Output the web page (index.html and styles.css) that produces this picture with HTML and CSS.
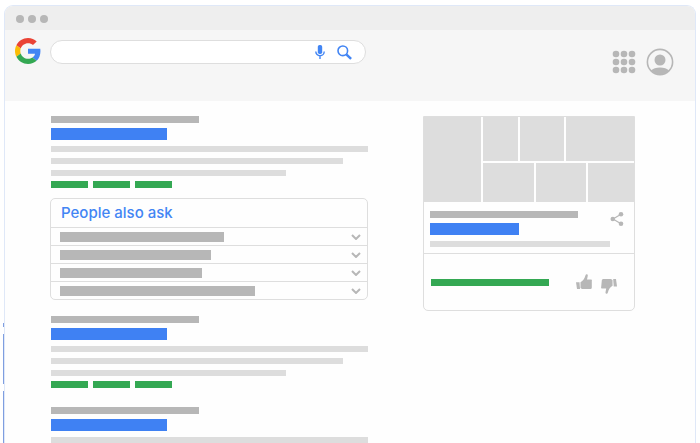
FILE: index.html
```html
<!DOCTYPE html>
<html lang="en">
<head>
    <meta charset="UTF-8">
    <meta name="viewport" content="width=device-width, initial-scale=1.0">
    <title>Search results</title>
    <link rel="stylesheet" href="styles.css">
</head>
<body>

    <div class="browser">
        <div class="titlebar">
            <span class="dot"></span>
            <span class="dot"></span>
            <span class="dot"></span>
        </div>

        <header class="header">
            <a class="logo" href="#" aria-label="Google">
                <svg viewBox="0 0 48 48" width="26" height="26">
                    <path fill="#EA4335" d="M24 9.5c3.54 0 6.71 1.22 9.21 3.6l6.85-6.85C35.9 2.38 30.47 0 24 0 14.62 0 6.51 5.38 2.56 13.22l7.98 6.19C12.43 13.72 17.74 9.5 24 9.5z"/>
                    <path fill="#4285F4" d="M46.98 24.55c0-1.57-.15-3.09-.38-4.55H24v9.02h12.94c-.58 2.96-2.26 5.48-4.78 7.18l7.73 6c4.51-4.18 7.09-10.36 7.09-17.65z"/>
                    <path fill="#FBBC05" d="M10.53 28.59c-.48-1.45-.76-2.99-.76-4.59s.27-3.14.76-4.59l-7.98-6.19C.92 16.46 0 20.12 0 24c0 3.88.92 7.54 2.56 10.78l7.97-6.19z"/>
                    <path fill="#34A853" d="M24 48c6.48 0 11.93-2.13 15.89-5.81l-7.73-6c-2.15 1.45-4.92 2.3-8.16 2.3-6.26 0-11.57-4.22-13.47-9.91l-7.98 6.19C6.51 42.62 14.62 48 24 48z"/>
                </svg>
            </a>

            <form class="search">
                <input class="search-input" type="text" aria-label="Search">
                <button class="icon-button" type="button" aria-label="Voice search">
                    <svg viewBox="0 0 10 14" width="10" height="14">
                        <rect x="2.8" y="0" width="4.4" height="9" rx="1.8" fill="#4285F4"/>
                        <path d="M.8 6.5a4.2 4.2 0 0 0 8.4 0M5 10.7V14" fill="none" stroke="#4285F4" stroke-width="1.4"/>
                    </svg>
                </button>
                <button class="icon-button" type="button" aria-label="Search">
                    <svg viewBox="0 0 15 15" width="15" height="15">
                        <circle cx="5.8" cy="5.8" r="4.8" fill="none" stroke="#4285F4" stroke-width="1.6"/>
                        <path d="M9.3 9.3l4.8 4.6" stroke="#4285F4" stroke-width="2.4"/>
                    </svg>
                </button>
            </form>

            <div class="account">
                <button class="icon-button" type="button" aria-label="Apps">
                    <svg viewBox="0 0 24 24" width="24" height="24" fill="#b7b7b7">
                        <circle cx="4" cy="4" r="3.3"/><circle cx="12" cy="4" r="3.3"/><circle cx="20" cy="4" r="3.3"/>
                        <circle cx="4" cy="12" r="3.3"/><circle cx="12" cy="12" r="3.3"/><circle cx="20" cy="12" r="3.3"/>
                        <circle cx="4" cy="20" r="3.3"/><circle cx="12" cy="20" r="3.3"/><circle cx="20" cy="20" r="3.3"/>
                    </svg>
                </button>
                <button class="icon-button" type="button" aria-label="Account">
                    <svg viewBox="0 0 28 28" width="28" height="28">
                        <circle cx="14" cy="14" r="12.6" fill="none" stroke="#b7b7b7" stroke-width="1.6"/>
                        <circle cx="14" cy="12" r="5.5" fill="#b7b7b7"/>
                        <path d="M5 22.500c2-2 5-3 9-3s7 1 9 3A12.600 12.600 0 0 1 5 22.500z" fill="#b7b7b7"/>
                    </svg>
                </button>
            </div>
        </header>

        <main class="page">
            <div class="results">
                <article class="result">
                    <div class="bar bar-url"></div>
                    <div class="bar bar-title"></div>
                    <div class="bar bar-text"></div>
                    <div class="bar bar-text medium"></div>
                    <div class="bar bar-text short"></div>
                    <div class="links">
                        <div class="bar bar-link"></div>
                        <div class="bar bar-link"></div>
                        <div class="bar bar-link"></div>
                    </div>
                </article>

                <section class="ask">
                    <h2 class="ask-title">People also ask</h2>
                    <button class="ask-row" type="button" aria-label="Question 1">
                        <span class="question q1"></span>
                        <svg class="chevron" viewBox="0 0 10 6" width="10" height="6"><path d="M1 1l4 4 4-4"/></svg>
                    </button>
                    <button class="ask-row" type="button" aria-label="Question 2">
                        <span class="question q2"></span>
                        <svg class="chevron" viewBox="0 0 10 6" width="10" height="6"><path d="M1 1l4 4 4-4"/></svg>
                    </button>
                    <button class="ask-row" type="button" aria-label="Question 3">
                        <span class="question q3"></span>
                        <svg class="chevron" viewBox="0 0 10 6" width="10" height="6"><path d="M1 1l4 4 4-4"/></svg>
                    </button>
                    <button class="ask-row" type="button" aria-label="Question 4">
                        <span class="question q4"></span>
                        <svg class="chevron" viewBox="0 0 10 6" width="10" height="6"><path d="M1 1l4 4 4-4"/></svg>
                    </button>
                </section>

                <article class="result">
                    <div class="bar bar-url"></div>
                    <div class="bar bar-title"></div>
                    <div class="bar bar-text"></div>
                    <div class="bar bar-text medium"></div>
                    <div class="bar bar-text short"></div>
                    <div class="links">
                        <div class="bar bar-link"></div>
                        <div class="bar bar-link"></div>
                        <div class="bar bar-link"></div>
                    </div>
                </article>

                <article class="result">
                    <div class="bar bar-url"></div>
                    <div class="bar bar-title"></div>
                    <div class="bar bar-text"></div>
                </article>
            </div>

            <aside class="panel">
                <div class="photos">
                    <div class="photo"></div>
                    <div class="photo-rows">
                        <div class="photo-row top">
                            <div class="photo"></div>
                            <div class="photo"></div>
                            <div class="photo"></div>
                        </div>
                        <div class="photo-row bottom">
                            <div class="photo"></div>
                            <div class="photo"></div>
                            <div class="photo"></div>
                        </div>
                    </div>
                </div>

                <div class="panel-info">
                    <div class="panel-head">
                        <div class="panel-names">
                            <div class="bar bar-url"></div>
                            <div class="bar bar-title"></div>
                        </div>
                        <button class="icon-button share" type="button" aria-label="Share">
                            <svg viewBox="0 0 14 14" width="14" height="14" fill="#b7b7b7">
                                <path d="M11 2.300L3 7l8 4.700" fill="none" stroke="#b7b7b7" stroke-width="1.200"/>
                                <circle cx="11" cy="2.300" r="2.300"/>
                                <circle cx="2.800" cy="7" r="2.300"/>
                                <circle cx="11" cy="11.700" r="2.300"/>
                            </svg>
                        </button>
                    </div>
                    <div class="bar bar-text"></div>
                </div>

                <div class="feedback">
                    <div class="bar bar-feedback"></div>
                    <button class="icon-button thumb-up" type="button" aria-label="Like">
                        <svg viewBox="0 0 16 16" width="16" height="16" fill="#b7b7b7">
                            <path d="M0 8.200h3.500L4 15H1z"/>
                            <path d="M4.500 8.200C7 7 8.700 4.500 9.500 1.200 9.900-.1 12 .1 11.800 1.800L11 5.500h3.800c1 0 1.300.8 1 1.500v6.500c0 1-.8 1.500-1.800 1.500H7c-1 0-2-.5-2.500-1z"/>
                        </svg>
                    </button>
                    <button class="icon-button thumb-down" type="button" aria-label="Dislike">
                        <svg viewBox="0 0 16 16" width="16" height="16" fill="#b7b7b7">
                            <path d="M16 8.500h-3.300L12.200 1h2.800z"/>
                            <path d="M11.600 7.800C9 9 7.600 11.500 6.800 14.800c-.4 1.300-2.500 1.100-2.300-.6L5.200 10.500H1.200c-1 0-1.300-.8-1-1.500L.8 2.500c.1-1 .8-1.500 1.800-1.500H9c1 0 2 .5 2.500 1z"/>
                        </svg>
                    </button>
                </div>
            </aside>
        </main>
    </div>

</body>
</html>
```

FILE: styles.css
```css
* {
    box-sizing: border-box;
}

body {
    font-family: Inter, "Liberation Sans", sans-serif;
    background-color: #fff;
    margin: 0;
    padding: 5px 4px 0;
}

.browser {
    position: relative;
    border: 1px solid #dfe8f8;
    border-bottom: 0;
    border-radius: 9px 9px 0 0;
    background-color: #fefefe;
}

/* broken blue line on the left edge */
.browser::before {
    content: "";
    position: absolute;
    left: -2px;
    top: 317px;
    bottom: 0;
    width: 1px;
    background: linear-gradient(#7f9ee0 4px, transparent 4px 11px, #7f9ee0 11px 61px, transparent 61px 68px, #7f9ee0 68px);
}

.titlebar {
    display: flex;
    align-items: center;
    gap: 4px;
    height: 24px;
    padding: 2px 11px 0;
    background-color: #eee;
    border-radius: 8px 8px 0 0;
}

.dot {
    width: 8px;
    height: 8px;
    border-radius: 50%;
    background-color: #b7b7b7;
}

.header {
    display: flex;
    align-items: flex-start;
    height: 71px;
    padding: 8px 21px 0 10px;
    background-color: #f6f6f6;
}

.logo {
    height: 26px;
}

.search {
    display: flex;
    align-items: center;
    gap: 12px;
    width: 48%;
    height: 24px;
    margin: 2px 0 0 9px;
    padding: 0 13px 0 12px;
    background-color: #fff;
    border: 1px solid #dedede;
    border-radius: 12px;
}

.search-input {
    flex: 1;
    min-width: 0;
    border: 0;
    outline: 0;
    background: none;
}

.icon-button {
    display: block;
    padding: 0;
    border: 0;
    background: none;
    line-height: 0;
}

.account {
    display: flex;
    align-items: center;
    gap: 10px;
    margin: 10px 0 0 auto;
}

.page {
    display: grid;
    grid-template-columns: 3fr 2fr;
    align-items: start;
    column-gap: 55px;
    padding: 15px 60px 0 45px;
}

.result {
    padding: 0 0 0 1px;
}

.bar {
    height: 6px;
    background-color: #ddd;
}

.bar-url {
    width: 148px;
    height: 7px;
    background-color: #b7b7b7;
}

.bar-title {
    width: 116px;
    height: 12px;
    margin: 5px 0 6px;
    background-color: #3f81f3;
}

.bar-text + .bar-text {
    margin-top: 6px;
}

.medium {
    width: 92%;
}

.short {
    width: 74%;
}

.links {
    display: flex;
    gap: 5px;
    margin-top: 5px;
}

.bar-link {
    width: 37px;
    height: 7px;
    background-color: #34a853;
}

.ask {
    margin: 10px 0 16px;
    border: 1px solid #dedede;
    border-radius: 5px;
}

.ask-title {
    margin: 0;
    padding: 0 10px;
    color: #4285f4;
    font-size: 15px;
    font-weight: 500;
    line-height: 28px;
}

.ask-row {
    display: flex;
    align-items: center;
    justify-content: space-between;
    width: 100%;
    height: 18px;
    padding: 0 6px 0 9px;
    border: 0;
    border-top: 1px solid #dedede;
    background: none;
}

.question {
    height: 10px;
    background-color: #b7b7b7;
}

.q1 {
    width: 164px;
}

.q2 {
    width: 151px;
}

.q3 {
    width: 142px;
}

.q4 {
    width: 195px;
}

.chevron {
    fill: none;
    stroke: #b7b7b7;
    stroke-width: 2;
}

.ask + .result {
    margin-bottom: 19px;
}

.panel {
    border: 1px solid #dedede;
    border-radius: 0 0 5px 5px;
}

.photos {
    display: grid;
    grid-template-columns: 57fr 151fr;
    gap: 2px;
    height: 85px;
}

.photo {
    background-color: #ddd;
}

.photo-rows {
    display: grid;
    grid-template-rows: 44fr 39fr;
    gap: 2px;
}

.photo-row {
    display: grid;
    gap: 2px;
}

.top {
    grid-template-columns: 35fr 45fr 68fr;
}

.bottom {
    grid-template-columns: 51fr 50fr 46fr;
}

.panel-info {
    padding: 9px 10px 6px 6px;
    border-bottom: 1px solid #dedede;
}

.panel-head {
    display: flex;
    align-items: flex-start;
    justify-content: space-between;
}

.share {
    margin-top: 1px;
}

.panel-head .bar-title {
    width: 89px;
}

.panel-info .bar-text {
    width: 180px;
}

.feedback {
    display: flex;
    align-items: center;
    height: 56px;
    padding: 0 17px 0 7px;
}

.bar-feedback {
    width: 118px;
    height: 7px;
    background-color: #34a853;
}

.thumb-up {
    margin: 0 9px 0 auto;
}

.thumb-down {
    margin-top: 8px;
}
```
